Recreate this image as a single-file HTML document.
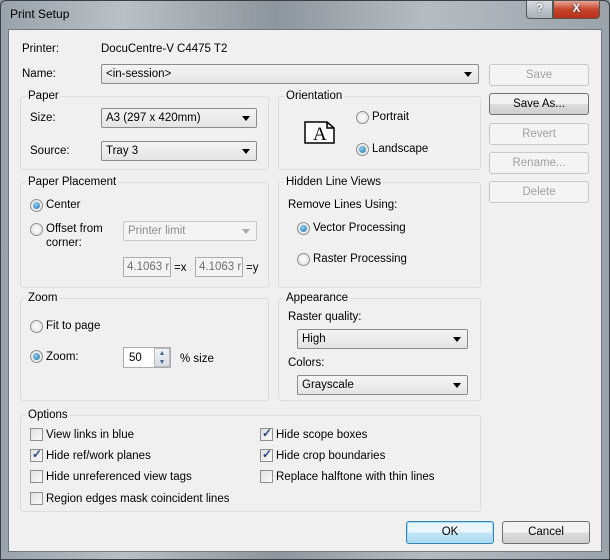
<!DOCTYPE html>
<html><head><meta charset="utf-8"><style>
*{box-sizing:border-box}
body{margin:0;width:610px;height:560px;overflow:hidden;font:11.5px "Liberation Sans",sans-serif;color:#000;background:#8f979f;position:relative}
.a{position:absolute}
#frame{left:0;top:0;width:610px;height:560px;background:linear-gradient(90deg,#9aa3ab,#b9c0c6 20%,#8e969d 45%,#b5bcc2 70%,#9aa2aa);border:1px solid #3a3f44;border-radius:6px 6px 0 0}
#client{left:8px;top:29px;width:594px;height:523px;background:#f0f0f0;border:1px solid #6f767c}
.grp{position:absolute;border:1px solid #dcdcdc;border-radius:3px}
.gl{position:absolute;background:#f0f0f0;padding:0 2px;line-height:13px}
.cb{position:absolute;height:20px;border:1px solid #8a8a8a;border-radius:2px;background:linear-gradient(#f4f4f4,#e4e4e4);padding:2px 4px;line-height:14px;white-space:nowrap}
.cb:after{content:"";position:absolute;right:6px;top:7px;border:4px solid transparent;border-top:5px solid #000;border-bottom:0}
.cb.dis{color:#8d8d8d;background:#f4f4f4;border-color:#c8c8c8}
.cb.dis:after{border-top-color:#aaa}
.btn{position:absolute;width:100px;height:22px;border:1px solid #707070;border-radius:3px;background:linear-gradient(#f2f2f2 50%,#dddddd 50%,#cfcfcf);text-align:center;line-height:20px}
.btn.dis{color:#a0a0a0;border-color:#c9c9c9;background:#f4f4f4}
.rd{position:absolute;width:13px;height:13px;border:1px solid #8e8f8f;border-radius:50%;background:radial-gradient(#fff,#dcdcdc)}
.rd.on:after{content:"";position:absolute;left:2px;top:2px;width:7px;height:7px;border-radius:50%;background:radial-gradient(circle at 40% 35%,#8fd0f3,#1e6fa8)}
.ck{position:absolute;width:13px;height:13px;border:1px solid #8e8f8f;background:linear-gradient(135deg,#e0e0e0,#fafafa)}
.ck.on:after{content:"✓";position:absolute;left:1px;top:-3px;font-size:12px;font-weight:bold;color:#2a4a8a}
.t{position:absolute;white-space:nowrap;line-height:14px}
.tb{position:absolute;height:20px;border:1px solid #ababab;background:#f4f4f4;color:#6d6d6d;padding:2px 3px;line-height:14px;white-space:nowrap;overflow:hidden}
</style></head><body>
<div id="frame" class="a"></div>
<div class="t" style="left:10px;top:7px;font-size:12px">Print Setup</div>
<div class="a" style="left:526px;top:0;width:27px;height:19px;border:1px solid #555;border-radius:0 0 0 4px;background:linear-gradient(#d8dde2,#a7b0b8);color:#fff;text-align:center;font-weight:bold;line-height:17px;text-shadow:0 0 2px #333">?</div>
<div class="a" style="left:553px;top:0;width:47px;height:19px;border:1px solid #555;border-radius:0 0 4px 0;background:linear-gradient(#e9a596,#c5432b 50%,#b93018);color:#fff;text-align:center;font-weight:bold;line-height:17px;text-shadow:0 0 2px #333">X</div>
<div id="client" class="a"></div>

<div class="t" style="left:22px;top:42px">Printer:</div>
<div class="t" style="left:101px;top:42px">DocuCentre-V C4475 T2</div>
<div class="t" style="left:22px;top:67px">Name:</div>
<div class="cb" style="left:101px;top:64px;width:378px">&lt;in-session&gt;</div>

<div class="btn dis" style="left:489px;top:64px">Save</div>
<div class="btn" style="left:489px;top:93px">Save As...</div>
<div class="btn dis" style="left:489px;top:123px">Revert</div>
<div class="btn dis" style="left:489px;top:152px">Rename...</div>
<div class="btn dis" style="left:489px;top:181px">Delete</div>

<div class="grp" style="left:20px;top:96px;width:249px;height:74px"></div>
<div class="gl" style="left:26px;top:90px">Paper</div>
<div class="t" style="left:30px;top:111px">Size:</div>
<div class="cb" style="left:101px;top:108px;width:156px">A3 (297 x 420mm)</div>
<div class="t" style="left:30px;top:144px">Source:</div>
<div class="cb" style="left:101px;top:141px;width:156px">Tray 3</div>

<div class="grp" style="left:278px;top:96px;width:203px;height:74px"></div>
<div class="gl" style="left:284px;top:90px">Orientation</div>
<svg class="a" style="left:304px;top:121px" width="32" height="24"><path d="M1 1H23L30 7V22H1Z M23 1V7H30" fill="#fff" stroke="#000" stroke-width="1.5"/><text x="9" y="19" font-family="Liberation Serif" font-size="19">A</text></svg>
<div class="rd" style="left:356px;top:111px"></div><div class="t" style="left:372px;top:110px">Portrait</div>
<div class="rd on" style="left:356px;top:143px"></div><div class="t" style="left:372px;top:142px">Landscape</div>

<div class="grp" style="left:20px;top:182px;width:249px;height:106px"></div>
<div class="gl" style="left:26px;top:176px">Paper Placement</div>
<div class="rd on" style="left:30px;top:199px"></div><div class="t" style="left:46px;top:198px">Center</div>
<div class="rd" style="left:30px;top:223px"></div><div class="t" style="left:46px;top:222px">Offset from<br>corner:</div>
<div class="cb dis" style="left:123px;top:221px;width:134px">Printer limit</div>
<div class="tb" style="left:123px;top:257px;width:48px">4.1063 r</div><div class="t" style="left:174px;top:261px">=x</div>
<div class="tb" style="left:195px;top:257px;width:48px">4.1063 r</div><div class="t" style="left:246px;top:261px">=y</div>

<div class="grp" style="left:278px;top:182px;width:203px;height:106px"></div>
<div class="gl" style="left:284px;top:176px">Hidden Line Views</div>
<div class="t" style="left:288px;top:198px">Remove Lines Using:</div>
<div class="rd on" style="left:297px;top:222px"></div><div class="t" style="left:313px;top:221px">Vector Processing</div>
<div class="rd" style="left:297px;top:253px"></div><div class="t" style="left:313px;top:252px">Raster Processing</div>

<div class="grp" style="left:20px;top:298px;width:249px;height:103px"></div>
<div class="gl" style="left:26px;top:292px">Zoom</div>
<div class="rd" style="left:30px;top:320px"></div><div class="t" style="left:46px;top:319px">Fit to page</div>
<div class="rd on" style="left:30px;top:350px"></div><div class="t" style="left:46px;top:350px">Zoom:</div>
<div class="a" style="left:123px;top:347px;width:48px;height:21px;border:1px solid #ababab;background:#fff;padding:3px 5px;line-height:14px">50</div>
<div class="a" style="left:154px;top:348px;width:16px;height:19px;border:1px solid #bbb;background:linear-gradient(#eef2f6,#d8dde3);font-size:7px;line-height:9px;text-align:center;color:#4a6a90">▲<br>▼</div>
<div class="t" style="left:180px;top:352px">% size</div>

<div class="grp" style="left:278px;top:298px;width:203px;height:103px"></div>
<div class="gl" style="left:284px;top:292px">Appearance</div>
<div class="t" style="left:288px;top:310px">Raster quality:</div>
<div class="cb" style="left:297px;top:329px;width:171px">High</div>
<div class="t" style="left:288px;top:356px">Colors:</div>
<div class="cb" style="left:297px;top:375px;width:171px">Grayscale</div>

<div class="grp" style="left:20px;top:415px;width:461px;height:97px"></div>
<div class="gl" style="left:26px;top:409px">Options</div>
<div class="ck" style="left:30px;top:428px"></div><div class="t" style="left:46px;top:428px">View links in blue</div>
<div class="ck on" style="left:30px;top:449px"></div><div class="t" style="left:46px;top:449px">Hide ref/work planes</div>
<div class="ck" style="left:30px;top:470px"></div><div class="t" style="left:46px;top:470px">Hide unreferenced view tags</div>
<div class="ck" style="left:30px;top:492px"></div><div class="t" style="left:46px;top:492px">Region edges mask coincident lines</div>
<div class="ck on" style="left:260px;top:428px"></div><div class="t" style="left:276px;top:428px">Hide scope boxes</div>
<div class="ck on" style="left:260px;top:449px"></div><div class="t" style="left:276px;top:449px">Hide crop boundaries</div>
<div class="ck" style="left:260px;top:470px"></div><div class="t" style="left:276px;top:470px">Replace halftone with thin lines</div>

<div class="btn" style="left:406px;top:521px;width:88px;height:23px;border-color:#3c7fb1;background:linear-gradient(#e8f5fc 50%,#c4e5f6 50%,#a9d9f2);box-shadow:inset 0 0 0 1px #9fe0fb">OK</div>
<div class="btn" style="left:502px;top:521px;width:88px;height:23px">Cancel</div>
</body></html>
